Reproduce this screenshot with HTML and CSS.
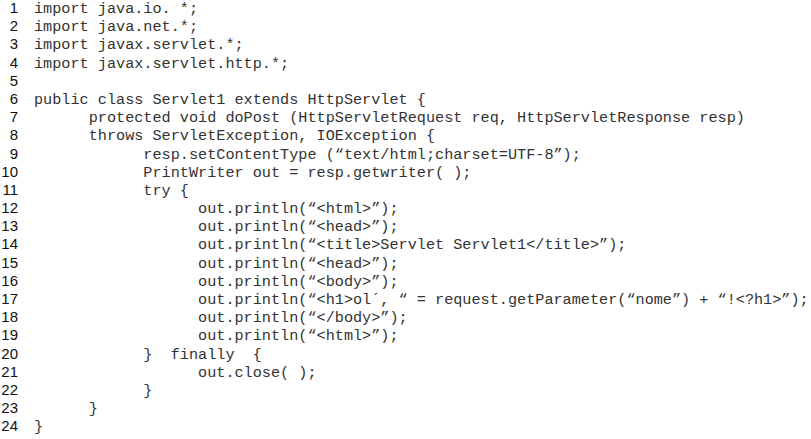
FILE: index.html
```html
<!DOCTYPE html>
<html>
<head>
<meta charset="utf-8">
<link rel="stylesheet" href="styles.css">
</head>
<body>
<div class="listing">
<div class="line"><span class="num">1</span><span class="code">import java.io. *;</span></div>
<div class="line"><span class="num">2</span><span class="code">import java.net.*;</span></div>
<div class="line"><span class="num">3</span><span class="code">import javax.servlet.*;</span></div>
<div class="line"><span class="num">4</span><span class="code">import javax.servlet.http.*;</span></div>
<div class="line"><span class="num">5</span><span class="code"></span></div>
<div class="line"><span class="num">6</span><span class="code">public class Servlet1 extends HttpServlet {</span></div>
<div class="line"><span class="num">7</span><span class="code">      protected void doPost (HttpServletRequest req, HttpServletResponse resp)</span></div>
<div class="line"><span class="num">8</span><span class="code">      throws ServletException, IOException {</span></div>
<div class="line"><span class="num">9</span><span class="code">            resp.setContentType (“text/html;charset=UTF-8”);</span></div>
<div class="line"><span class="num">10</span><span class="code">            PrintWriter out = resp.getwriter( );</span></div>
<div class="line"><span class="num">11</span><span class="code">            try {</span></div>
<div class="line"><span class="num">12</span><span class="code">                  out.println(“&lt;html&gt;”);</span></div>
<div class="line"><span class="num">13</span><span class="code">                  out.println(“&lt;head&gt;”);</span></div>
<div class="line"><span class="num">14</span><span class="code">                  out.println(“&lt;title&gt;Servlet Servlet1&lt;/title&gt;”);</span></div>
<div class="line"><span class="num">15</span><span class="code">                  out.println(“&lt;head&gt;”);</span></div>
<div class="line"><span class="num">16</span><span class="code">                  out.println(“&lt;body&gt;”);</span></div>
<div class="line"><span class="num">17</span><span class="code">                  out.println(“&lt;h1&gt;ol´, “ = request.getParameter(“nome”) + “!&lt;?h1&gt;”);</span></div>
<div class="line"><span class="num">18</span><span class="code">                  out.println(“&lt;/body&gt;”);</span></div>
<div class="line"><span class="num">19</span><span class="code">                  out.println(“&lt;html&gt;”);</span></div>
<div class="line"><span class="num">20</span><span class="code">            }  finally  {</span></div>
<div class="line"><span class="num">21</span><span class="code">                  out.close( );</span></div>
<div class="line"><span class="num">22</span><span class="code">            }</span></div>
<div class="line"><span class="num">23</span><span class="code">      }</span></div>
<div class="line"><span class="num">24</span><span class="code">}</span></div>
</div>
</body>
</html>
```
FILE: styles.css
```css
html, body {
  margin: 0;
  padding: 0;
  background: #ffffff;
}
.listing {
  display: flex;
  flex-direction: column;
  margin-top: -1px;
}
.line {
  display: flex;
  align-items: baseline;
  height: 18.2px;
  line-height: 18.2px;
}
.num {
  width: 18px;
  flex: 0 0 18px;
  text-align: right;
  font-family: "Liberation Sans", Arial, sans-serif;
  font-size: 15px;
  color: #111;
}
.code {
  margin-left: 16px;
  white-space: pre;
  font-family: "Liberation Mono", "Courier New", monospace;
  font-size: 15.2px;
  color: #333;
}
```
